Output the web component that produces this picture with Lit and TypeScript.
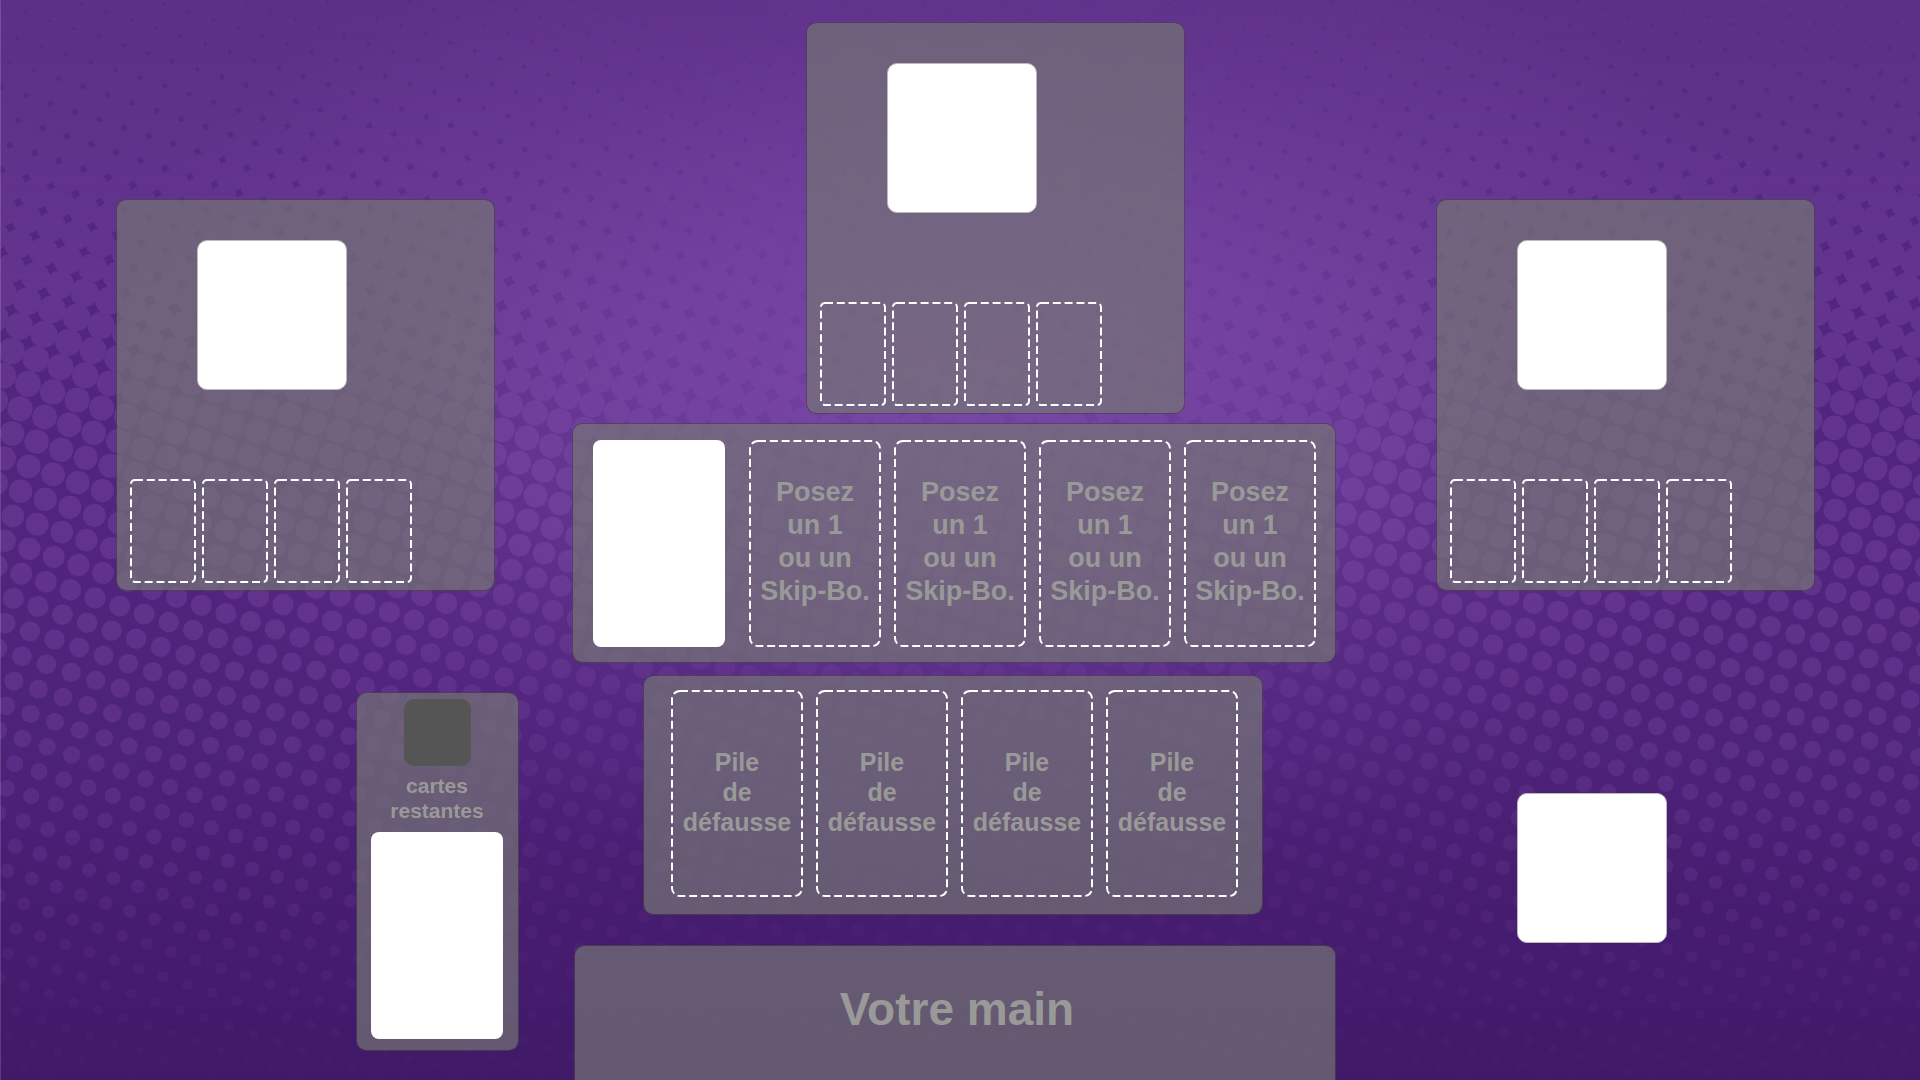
import { LitElement, html, svg, css } from "lit";
import { customElement, property } from "lit/decorators.js";

/** Halftone lattice: dot centres sit at ORIGIN + m*STEP_A + n*STEP_B. */
const ORIGIN = [20, 408.7];
const STEP_A = [24.58, 8.06];
const STEP_B = [-7.98, 24.81];

/** Dot radius at each 100px of height, from the merged top to the sparse bottom. */
const RADII = [17.1, 16, 15.1, 14, 12.6, 11.6, 10.6, 9.4, 8.1, 6.7, 5.2, 3.6, 2.5];

function radiusAt(x: number, y: number): number {
  const shift = 70 * Math.exp(-(((x - 960) / 420) ** 2));
  const t = Math.min(Math.max((y - shift) / 100, 0), RADII.length - 1.01);
  const i = Math.floor(t);
  return RADII[i] + (RADII[i + 1] - RADII[i]) * (t - i);
}

/** Dashed outline of an empty card place, drawn just inside a w by h box. */
function dashedOutline(w: number, h: number, radius: number) {
  return html`
    <svg class="outline" width=${w} height=${h} viewBox="0 0 ${w} ${h}" aria-hidden="true">
      <rect
        x="1"
        y="1"
        width=${w - 2}
        height=${h - 2}
        rx=${radius}
        fill="none"
        stroke="#fff"
        stroke-width="2"
        stroke-dasharray="8 3.8"
      />
    </svg>
  `;
}

@customElement("halftone-backdrop")
export class HalftoneBackdrop extends LitElement {
  static styles = css`
    :host {
      display: block;
    }
    svg {
      display: block;
      width: 100%;
      height: 100%;
    }
  `;

  private dots() {
    const circles = [];
    for (let m = -40; m <= 120; m++) {
      for (let n = -60; n <= 60; n++) {
        const x = ORIGIN[0] + m * STEP_A[0] + n * STEP_B[0];
        const y = ORIGIN[1] + m * STEP_A[1] + n * STEP_B[1];
        if (x < -20 || x > 1940 || y < -20 || y > 1100) continue;
        circles.push(svg`<circle cx=${x.toFixed(1)} cy=${y.toFixed(1)} r=${radiusAt(x, y).toFixed(1)} />`);
      }
    }
    return circles;
  }

  render() {
    return html`
      <svg viewBox="0 0 1920 1080" preserveAspectRatio="none" aria-hidden="true">
        <defs>
          <linearGradient id="base" x1="0" y1="0" x2="0" y2="1">
            <stop offset="0" stop-color="#562b81" />
            <stop offset="0.15" stop-color="#542981" />
            <stop offset="0.3" stop-color="#52267e" />
            <stop offset="0.5" stop-color="#51257d" />
            <stop offset="0.7" stop-color="#4d2279" />
            <stop offset="0.85" stop-color="#461c70" />
            <stop offset="1" stop-color="#401968" />
          </linearGradient>
          <radialGradient
            id="glow"
            gradientUnits="userSpaceOnUse"
            cx="0"
            cy="0"
            r="1"
            gradientTransform="translate(960 370) scale(860 500)"
          >
            <stop offset="0" stop-color="#8450b4" stop-opacity="0.7" />
            <stop offset="0.35" stop-color="#8450b4" stop-opacity="0.5" />
            <stop offset="0.7" stop-color="#8450b4" stop-opacity="0.16" />
            <stop offset="1" stop-color="#8450b4" stop-opacity="0" />
          </radialGradient>
          <linearGradient id="tone" gradientUnits="userSpaceOnUse" x1="0" y1="0" x2="0" y2="1080">
            <stop offset="0" stop-color="#fff" stop-opacity="0.4" />
            <stop offset="0.12" stop-color="#fff" stop-opacity="0.65" />
            <stop offset="0.27" stop-color="#fff" stop-opacity="1" />
            <stop offset="0.5" stop-color="#fff" stop-opacity="1" />
            <stop offset="0.65" stop-color="#fff" stop-opacity="0.88" />
            <stop offset="0.8" stop-color="#fff" stop-opacity="0.62" />
            <stop offset="0.92" stop-color="#fff" stop-opacity="0.3" />
            <stop offset="1" stop-color="#fff" stop-opacity="0.1" />
          </linearGradient>
          <radialGradient
            id="calm"
            gradientUnits="userSpaceOnUse"
            cx="0"
            cy="0"
            r="1"
            gradientTransform="translate(960 840) scale(680 400)"
          >
            <stop offset="0" stop-color="#000" stop-opacity="0.8" />
            <stop offset="0.5" stop-color="#000" stop-opacity="0.5" />
            <stop offset="1" stop-color="#000" stop-opacity="0" />
          </radialGradient>
          <radialGradient
            id="haze"
            gradientUnits="userSpaceOnUse"
            cx="0"
            cy="0"
            r="1"
            gradientTransform="translate(960 260) scale(520 420)"
          >
            <stop offset="0" stop-color="#000" stop-opacity="0.65" />
            <stop offset="0.5" stop-color="#000" stop-opacity="0.4" />
            <stop offset="1" stop-color="#000" stop-opacity="0" />
          </radialGradient>
          <mask id="fade" maskUnits="userSpaceOnUse" x="0" y="0" width="1920" height="1080">
            <rect width="1920" height="1080" fill="url(#tone)" />
            <rect width="1920" height="1080" fill="url(#calm)" />
            <rect width="1920" height="1080" fill="url(#haze)" />
          </mask>
        </defs>
        <rect width="1920" height="1080" fill="url(#base)" />
        <rect width="1920" height="1080" fill="url(#glow)" />
        <g mask="url(#fade)">
          <g fill="#aa6ecd" opacity="0.2">${this.dots()}</g>
        </g>
        <rect width="1" height="1080" fill="#fff" opacity="0.15" />
      </svg>
    `;
  }
}

@customElement("opponent-area")
export class OpponentArea extends LitElement {
  static styles = css`
    :host {
      display: flex;
      flex-direction: column;
      box-sizing: border-box;
      width: 379px;
      padding: 40px 13px 7px;
      border: 1px solid rgba(72, 68, 72, 0.7);
      border-radius: 10px;
      background: rgba(117, 117, 117, 0.7);
      background-clip: padding-box;
    }
    .avatar {
      box-sizing: border-box;
      width: 150px;
      height: 150px;
      margin: 0 0 89px 67px;
      border: 1px solid #bbb;
      border-radius: 10px;
      background: #fff;
    }
    .piles {
      display: flex;
      gap: 6px;
      margin: 0;
      padding: 0;
      list-style: none;
    }
    .pile {
      width: 66px;
      height: 104px;
    }
    .outline {
      display: block;
    }
  `;

  render() {
    return html`
      <div class="avatar"></div>
      <ul class="piles">
        ${[0, 1, 2, 3].map(() => html`<li class="pile">${dashedOutline(66, 104, 4)}</li>`)}
      </ul>
    `;
  }
}

@customElement("card-slots")
export class CardSlots extends LitElement {
  @property({ attribute: false }) lines: string[] = [];

  static styles = css`
    .slots {
      display: flex;
      gap: 13px;
      margin: 0;
      padding: 0;
      list-style: none;
    }
    .slot {
      display: grid;
      place-items: center;
      width: 132px;
      height: 207px;
      text-align: center;
      white-space: nowrap;
    }
    .outline,
    .label {
      grid-area: 1 / 1;
    }
    .outline {
      display: block;
    }
    .label {
      padding-bottom: 3px;
    }
  `;

  render() {
    return html`
      <ul class="slots">
        ${[0, 1, 2, 3].map(
          () => html`
            <li class="slot">
              ${dashedOutline(132, 207, 8)}
              <span class="label">${this.lines.map((line, i) => (i ? html`<br />${line}` : line))}</span>
            </li>
          `
        )}
      </ul>
    `;
  }
}

@customElement("app-root")
export class AppRoot extends LitElement {
  static styles = css`
    :host {
      display: block;
      font-family: "Liberation Sans", Arial, Helvetica, sans-serif;
      font-weight: 700;
      color: #999a98;
    }
    .table {
      position: relative;
      display: grid;
      grid-template-columns: 1fr 764px 1fr;
      box-sizing: border-box;
      height: 100vh;
      padding-right: 12px;
      overflow: hidden;
      background: #52267e;
    }
    .backdrop {
      position: absolute;
      inset: 0;
    }
    .column {
      position: relative;
      display: flex;
      flex-direction: column;
    }
    .left {
      padding: 199px 53px 0 116px;
      gap: 101px;
    }
    .center {
      padding-top: 22px;
      align-items: center;
    }
    .right {
      padding: 199px 0 0 100px;
      gap: 202px;
    }
    .facing {
      margin: 0 0 9px 82px;
    }
    .panel {
      box-sizing: border-box;
      border: 1px solid rgba(72, 68, 72, 0.7);
      border-radius: 10px;
      background: rgba(117, 117, 117, 0.7);
      background-clip: padding-box;
    }
    .card {
      width: 132px;
      height: 207px;
      border-radius: 8px;
      background: #fff;
    }
    .stock {
      display: flex;
      flex-direction: column;
      align-items: center;
      align-self: flex-end;
      gap: 7px;
      width: 163px;
      padding: 6px 15px 11px 14px;
    }
    .count {
      width: 67px;
      height: 67px;
      border-radius: 10px;
      background: #555;
    }
    .remaining {
      margin: 0;
      padding-bottom: 2px;
      font-size: 21px;
      line-height: 25px;
      text-align: center;
    }
    .building {
      display: flex;
      gap: 24px;
      padding: 16px 19px 15px 20px;
      margin-bottom: 12px;
      font-size: 27px;
      line-height: 33px;
    }
    .discard {
      padding: 14px 24px 17px 27px;
      margin: 0 2px 30px 0;
      font-size: 25px;
      line-height: 30px;
    }
    .hand {
      flex: none;
      width: 762px;
      height: 260px;
      padding: 35px 0 0 4px;
      align-self: flex-end;
      text-align: center;
    }
    .hand-title {
      margin: 0;
      font-size: 46px;
      line-height: 56px;
    }
    .player {
      box-sizing: border-box;
      width: 150px;
      height: 150px;
      margin-left: 81px;
      border: 1px solid #bbb;
      border-radius: 10px;
      background: #fff;
    }
  `;

  render() {
    return html`
      <main class="table">
        <halftone-backdrop class="backdrop"></halftone-backdrop>
        <div class="column left">
          <opponent-area></opponent-area>
          <section class="panel stock">
            <div class="count"></div>
            <p class="remaining">cartes<br />restantes</p>
            <div class="card"></div>
          </section>
        </div>
        <div class="column center">
          <opponent-area class="facing"></opponent-area>
          <section class="panel building">
            <div class="card"></div>
            <card-slots .lines=${["Posez", "un 1", "ou un", "Skip-Bo."]}></card-slots>
          </section>
          <section class="panel discard">
            <card-slots .lines=${["Pile", "de", "défausse"]}></card-slots>
          </section>
          <section class="panel hand">
            <h2 class="hand-title">Votre main</h2>
          </section>
        </div>
        <div class="column right">
          <opponent-area></opponent-area>
          <div class="player"></div>
        </div>
      </main>
    `;
  }
}
